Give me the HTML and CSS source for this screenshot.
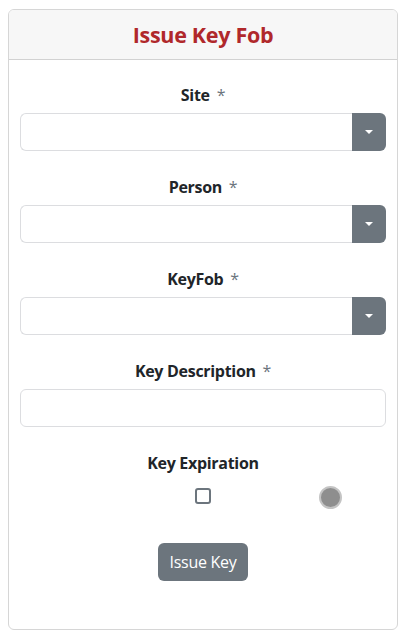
FILE: index.html
```html
<!DOCTYPE html>
<html>
<head>
<meta charset="utf-8">
<link rel="stylesheet" href="styles.css">
</head>
<body>
<div class="card">
  <div class="card-header"><h1 class="title">Issue Key Fob</h1></div>
  <div class="card-body">
    <div class="group">
      <label class="label">Site <span class="req">*</span></label>
      <div class="select"><div class="select-field"></div><div class="select-btn"><span class="caret"></span></div></div>
    </div>
    <div class="group">
      <label class="label">Person <span class="req">*</span></label>
      <div class="select"><div class="select-field"></div><div class="select-btn"><span class="caret"></span></div></div>
    </div>
    <div class="group">
      <label class="label">KeyFob <span class="req">*</span></label>
      <div class="select"><div class="select-field"></div><div class="select-btn"><span class="caret"></span></div></div>
    </div>
    <div class="group">
      <label class="label">Key Description <span class="req">*</span></label>
      <div class="input"></div>
    </div>
    <div class="group">
      <label class="label">Key Expiration</label>
      <div class="exp-row">
        <div class="exp-cell"></div>
        <div class="exp-cell"><span class="checkbox"></span></div>
        <div class="exp-cell"><span class="dot"></span></div>
      </div>
    </div>
    <div class="actions"><button class="btn">Issue Key</button></div>
  </div>
</div>
</body>
</html>
```
FILE: styles.css
```css
* { box-sizing: border-box; }
html, body { margin: 0; padding: 0; background: #fff; }
body {
  font-family: "Open Sans", "Noto Sans", sans-serif;
  color: #212529;
  padding: 9px 8px 6px 8px;
}
.card {
  border: 1px solid #d6d6d6;
  border-radius: 6px;
  height: 621px;
  overflow: hidden;
}
.card-header {
  background: #f7f7f7;
  border-bottom: 1px solid #d2d2d2;
  height: 50px;
  display: flex;
  align-items: center;
  justify-content: center;
}
.title {
  margin: 0;
  font-size: 21.5px;
  font-weight: 700;
  color: #b0282b;
  letter-spacing: -0.3px;
}
.card-body {
  padding: 23px 11px 0 11px;
}
.group { margin-bottom: 24px; }
.label {
  display: block;
  text-align: center;
  font-weight: 700;
  font-size: 16px;
  line-height: 24px;
  margin-bottom: 6px;
  letter-spacing: -0.3px;
}
.req { color: #6c757d; font-weight: 400; margin-left: 3px; }
.select {
  display: flex;
  height: 38px;
}
.select-field {
  flex: 1;
  border: 1px solid #dcdde0;
  border-right: none;
  border-radius: 6px 0 0 6px;
}
.select-btn {
  width: 34px;
  background: #6c757d;
  border-radius: 0 6px 6px 0;
  display: flex;
  align-items: center;
  justify-content: center;
}
.caret {
  width: 0; height: 0;
  border-left: 4px solid transparent;
  border-right: 4px solid transparent;
  border-top: 4px solid #fff;
}
.input {
  height: 38px;
  border: 1px solid #dcdde0;
  border-radius: 6px;
}
.exp-row {
  display: grid;
  grid-template-columns: 1fr 1fr 1fr;
  height: 32px;
  align-items: center;
}
.exp-cell {
  display: flex;
  justify-content: center;
}
.checkbox {
  width: 16px; height: 16px;
  border: 2px solid #6c757d;
  border-radius: 3px;
  margin-top: -2px;
}
.dot {
  width: 23px; height: 23px;
  border-radius: 50%;
  background: #8e8e8e;
  border: 2px solid #c4c4c4;
  margin-left: 10px;
}
.actions {
  display: flex;
  justify-content: center;
  padding-top: 6px;
}
.btn {
  font-family: inherit;
  font-size: 16px;
  color: #fff;
  background: #6c757d;
  border: none;
  border-radius: 6px;
  height: 38px;
  padding: 0 12px;
  letter-spacing: -0.3px;
}
```
